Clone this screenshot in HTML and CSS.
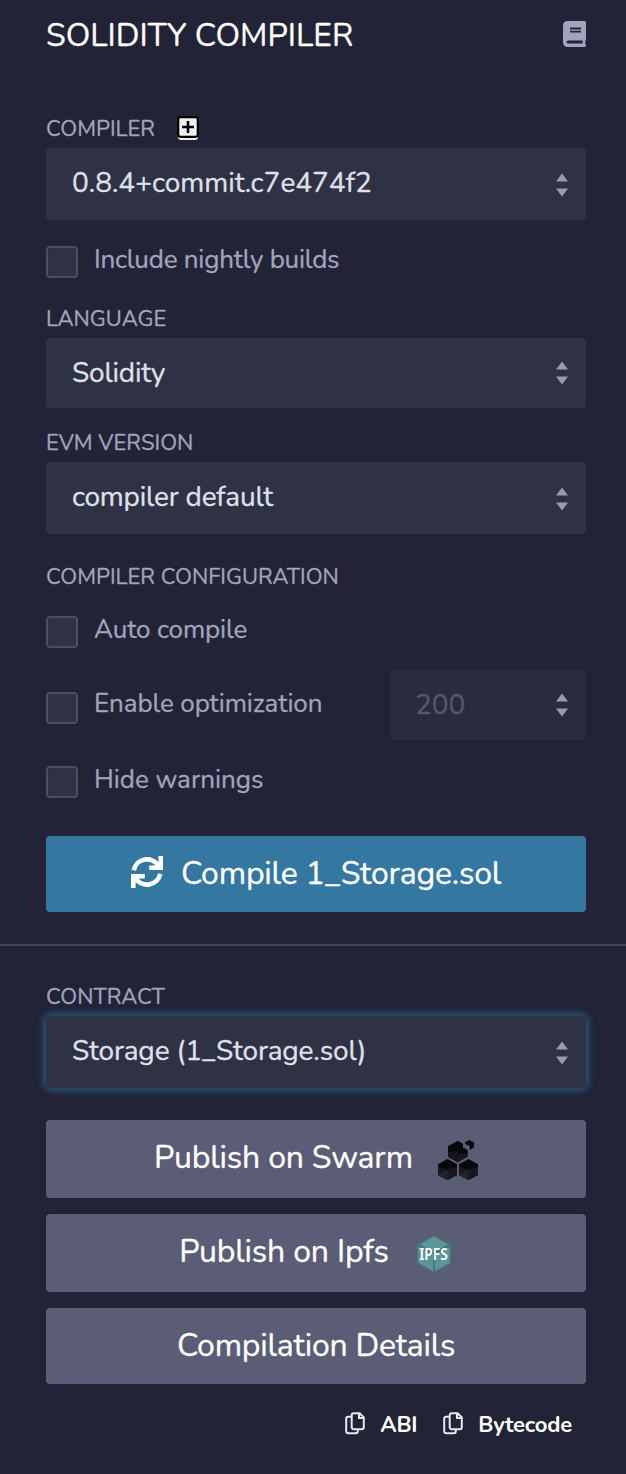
FILE: index.html
```html
<!DOCTYPE html>
<html lang="en">
<head>
<meta charset="utf-8">
<title>Solidity Compiler</title>
<link rel="stylesheet" href="styles.css">
</head>
<body>
<svg class="defs" width="0" height="0">
  <symbol id="arrows" viewBox="0 0 12 24"><path d="M6 0.5 12 8.5H0zM0 15.500H12L6 23.500z"/></symbol>
  <symbol id="copy" viewBox="0 0 20 23"><path d="M6.500 4.800H3.200A2 2 0 0 0 1.200 6.800V19.300A2 2 0 0 0 3.200 21.300H10.800A2 2 0 0 0 12.800 19.300V17.700M8.700 1.200H14.600L18.800 5.400V15.200A2 2 0 0 1 16.800 17.200H8.700A2 2 0 0 1 6.700 15.200V3.200A2 2 0 0 1 8.700 1.200zM14 1.500V6H18.500"/></symbol>
</svg>
<main class="panel">
  <header class="header">
    <h1 class="title">SOLIDITY COMPILER</h1>
    <svg class="book" viewBox="0 0 23 26"><path fill-rule="evenodd" d="M5 0H21.800Q23 0 23 1.200V18.200Q23 19 22.400 19.300V23.200Q23 23.600 23 24.600Q23 26 21.800 26H5Q0 26 0 21V5Q0 0 5 0zM7 6.600V8.400H18V6.600zM7 9.800V11.600H18V9.800zM5.300 19.400Q3.500 19.600 3.500 21T5.300 22.600H19.600V19.400z"/></svg>
  </header>

  <div class="label label-compiler"><span class="text">COMPILER</span>
    <svg class="plus" viewBox="0 0 22 24"><rect x="1" y="3" width="20" height="21" rx="3" fill="#efefef"/><rect x="1.200" y="1.200" width="19.600" height="19.600" rx="2.200" fill="#efefef" stroke="#000" stroke-width="2.200"/><path d="M11 5V17M5 11H17" stroke="#000" stroke-width="2.600"/></svg>
  </div>
  <div class="select"><span class="text">0.8.4+commit.c7e474f2</span><svg class="arrows"><use href="#arrows"/></svg></div>
  <div class="option option-nightly"><i class="box"></i><span class="text">Include nightly builds</span></div>

  <div class="label label-language"><span class="text">LANGUAGE</span></div>
  <div class="select select-short tight"><span class="text">Solidity</span><svg class="arrows"><use href="#arrows"/></svg></div>

  <div class="label label-evm"><span class="text">EVM VERSION</span></div>
  <div class="select tight"><span class="text">compiler default</span><svg class="arrows"><use href="#arrows"/></svg></div>

  <div class="label label-config"><span class="text">COMPILER CONFIGURATION</span></div>
  <div class="option option-auto"><i class="box"></i><span class="text">Auto compile</span></div>
  <div class="optimize">
    <div class="option option-optimize"><i class="box"></i><span class="text">Enable optimization</span></div>
    <div class="select select-short runs"><span class="text">200</span><svg class="arrows"><use href="#arrows"/></svg></div>
  </div>
  <div class="option option-hide"><i class="box"></i><span class="text">Hide warnings</span></div>

  <div class="button compile">
    <svg class="sync" viewBox="0 0 32 32"><path d="M2.800 14.200A13.400 13.400 0 0 1 27.500 10M29.700 0V11.800H18.200M29.200 17.800A13.400 13.400 0 0 1 4.500 22M2.300 32V20.200H13.800"/></svg>
    <span class="text">Compile 1_Storage.sol</span>
  </div>

  <hr class="divider">

  <div class="label label-contract"><span class="text">CONTRACT</span></div>
  <div class="select focused"><span class="text">Storage (1_Storage.sol)</span><svg class="arrows"><use href="#arrows"/></svg></div>

  <div class="button swarm"><span class="text">Publish on Swarm</span>
    <svg class="swarm-logo" viewBox="0 0 40 40">
      <g fill="#08080b"><path d="M9.500 19 19 24.300V35L9.500 40 0 35V24.300z"/><path d="M30.500 19 40 24.300V35L30.500 40 21 35V24.300z"/><path d="M19.800.8 25 3.800V7.400L29.700 10V16.500L19.800 22.300 10 16.700V6.300z"/><path d="M31.500 0 36 2.300V7.300L31.800 10V6.200L27 3.700V2.300z"/></g>
      <g fill="#17171c"><path d="M0 35V27L9.500 29.500 19 27V35L9.500 40zM21 35V27L30.500 29.500 40 27V35L30.500 40zM10 16.700V12L19.800 11.500V22.300zM20.500 13.500 29.700 14V16.500L19.800 22.300z"/></g>
      <g fill="#24242b"><path d="M9.500 29.500V40L0 35zM30.500 29.500V40L21 35z"/></g>
    </svg>
  </div>
  <div class="button ipfs"><span class="text">Publish on Ipfs</span>
    <svg class="ipfs-logo" viewBox="0 0 34 38"><path d="M17 0 34 9.500V28.500L17 38 0 28.500V9.500z" fill="#43797b"/><path d="M17 1.500 31 9.500 17 17 3 9.500zM1.500 12 16 19.500V36L1.500 27.700zM32.500 12 18 19.500V36L32.500 27.700z" fill="#5b9796"/><text x="16.500" y="24.800" text-anchor="middle" textLength="28.500" lengthAdjust="spacingAndGlyphs">IPFS</text></svg>
  </div>
  <div class="button details"><span class="text">Compilation Details</span></div>

  <footer class="footer">
    <svg class="copy"><use href="#copy"/></svg><span class="text">ABI</span>
    <svg class="copy copy-second"><use href="#copy"/></svg><span class="text">Bytecode</span>
  </footer>
</main>
</body>
</html>
```
FILE: styles.css
```css
* { box-sizing: border-box; }
body { margin: 0; background: #222336; color: #a2a3bd; font-family: Nunito, Lato, "Noto Sans", sans-serif; -webkit-text-stroke: 0.3px currentColor; }
.defs { position: absolute; }
.panel { display: flex; flex-direction: column; height: 1474px; padding: 14px 40px 0 46px; overflow: hidden; }
.text { white-space: nowrap; }
.header { display: flex; justify-content: space-between; height: 101px; }
.title { margin: 2px 0 0; color: #fff; font-size: 32px; font-weight: 400; line-height: 40px; }
.book { width: 23px; height: 26px; margin-top: 7px; fill: #a2a3bd; }
.label { display: flex; align-items: flex-start; height: 33px; font-size: 22px; line-height: 28px; }
.plus { width: 22px; height: 24px; margin: 1px 0 0 22px; }
.select { display: flex; flex: none; align-items: center; justify-content: space-between; height: 72px; padding: 0 18px 0 26px; border-radius: 4px; background: #2f3144; color: #dfe1ea; font-size: 28px; line-height: 34px; }
.select .text { padding-bottom: 3px; }
.tight { letter-spacing: -0.2px; }
.select-short { height: 70px; }
.select-short .text { padding-bottom: 1px; }
.arrows { width: 12px; height: 24px; margin-top: 2px; fill: #959bb5; }
.select-short .arrows { margin-top: 0; }
.option { display: flex; gap: 16px; height: 36px; font-size: 26px; line-height: 36px; }
.box { width: 32px; height: 32px; margin-top: 4px; border: 2px solid #4c4e60; border-radius: 4px; background: #2f3144; }
.option-nightly { margin-top: 22px; letter-spacing: -0.21px; }
.label-language { margin-top: 27px; }
.label-evm { margin-top: 21px; }
.label-config { margin-top: 29px; }
.option-auto { margin-top: 16px; letter-spacing: -0.14px; }
.optimize { display: flex; justify-content: space-between; margin-top: 22px; }
.option-optimize { padding-top: 16px; height: 54px; letter-spacing: -0.1px; }
.option-optimize .box { margin-top: 6px; }
.runs { width: 196px; padding-left: 25px; background: #2a2b3d; color: #555770; }
.option-hide { margin-top: 22px; }
.button { display: flex; flex: none; align-items: center; justify-content: center; height: 78px; border-radius: 4px; background: #5b5c75; color: #fff; font-size: 32px; line-height: 40px; letter-spacing: -0.17px; }
.button .text { padding-bottom: 2px; }
.compile { height: 76px; margin-top: 38px; background: #3478a1; letter-spacing: -0.2px; }
.compile .text, .details .text { padding-bottom: 0; }
.sync { width: 32px; height: 32px; margin: 0 18px 4px 0; fill: none; stroke: #fff; stroke-width: 4.6; }
.divider { flex: none; width: 626px; height: 2px; margin: 32px 0 0 -46px; border: 0; background: #46475c; }
.label-contract { margin-top: 37px; }
.focused { box-shadow: 0 0 8px 1px #2f6d91; letter-spacing: -0.15px; }
.swarm { margin-top: 32px; }
.swarm-logo { width: 40px; height: 40px; margin: 2px 0 0 25px; }
.ipfs { margin-top: 16px; padding-right: 2px; }
.ipfs-logo { width: 34px; height: 38px; margin: 2px 0 0 28px; }
.ipfs-logo text { fill: #fff; font: 600 16px "Noto Sans", sans-serif; letter-spacing: 0; }
.details { height: 76px; margin-top: 16px; letter-spacing: -0.21px; }
.footer { display: flex; justify-content: flex-end; margin-top: 27px; padding-right: 14px; color: #fff; font-size: 22px; font-weight: 700; line-height: 28px; letter-spacing: -0.2px; -webkit-text-stroke: 0; }
.copy { width: 20px; height: 23px; margin: 1px 15px 0 0; fill: none; stroke: #e8e8ee; stroke-width: 2; }
.copy-second { margin-left: 26px; }
```
